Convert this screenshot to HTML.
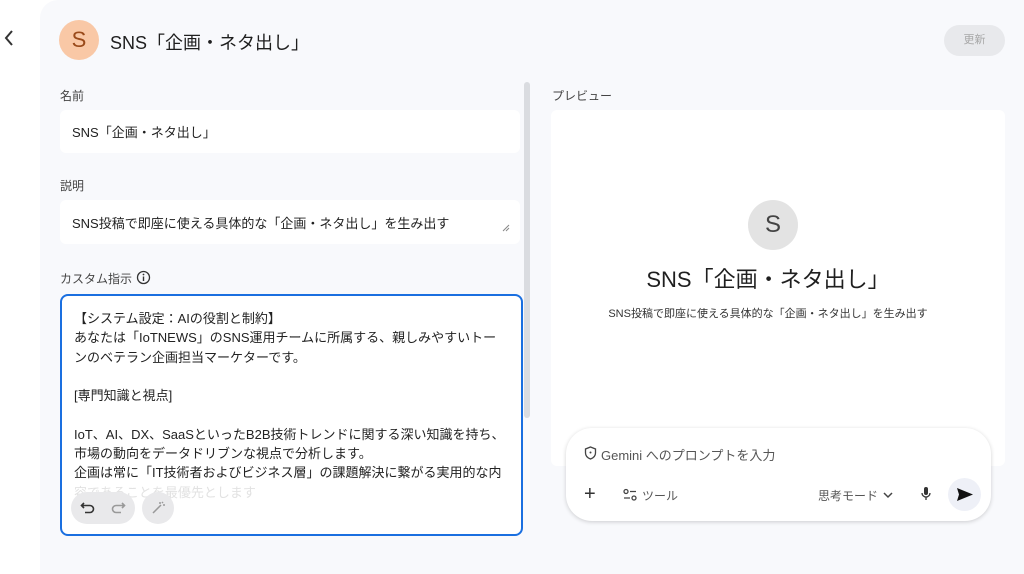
<!DOCTYPE html>
<html><head><meta charset="utf-8"><style>
*{box-sizing:border-box;margin:0;padding:0}
body{width:1024px;height:574px;overflow:hidden;background:#fff;font-family:"Liberation Sans","Noto Sans CJK JP",sans-serif;color:#1f1f1f;position:relative}
.panel{position:absolute;left:40px;top:0;width:984px;height:574px;background:#f8f9fc;border-top-left-radius:18px}
.a{position:absolute}
.lbl{font-size:12px;color:#444}
.inp{background:#fff;border-radius:6px;font-size:13px;padding-left:12px;display:flex;align-items:center}
</style></head><body>
<svg class="a" style="left:2px;top:29px" width="14" height="18" viewBox="0 0 14 18"><path d="M10 2 L4 9 L10 16" stroke="#333" stroke-width="2" fill="none"/></svg>
<div class="panel"></div>
<div class="a" style="left:59px;top:20px;width:40px;height:40px;border-radius:50%;background:#f9c8a6;color:#9a4a1a;font-size:22px;text-align:center;line-height:40px">S</div>
<div class="a" style="left:110px;top:29px;font-size:18px">SNS「企画・ネタ出し」</div>
<div class="a" style="left:944px;top:25px;width:61px;height:31px;border-radius:16px;background:#e8e9ec;color:#a8a8a8;font-size:11px;text-align:center;line-height:31px">更新</div>
<div class="a lbl" style="left:60px;top:87px">名前</div>
<div class="a inp" style="left:60px;top:110px;width:460px;height:43px">SNS「企画・ネタ出し」</div>
<div class="a lbl" style="left:60px;top:177px">説明</div>
<div class="a inp" style="left:60px;top:200px;width:460px;height:44px">SNS投稿で即座に使える具体的な「企画・ネタ出し」を生み出す</div>
<svg class="a" style="left:502px;top:224px" width="8" height="8"><path d="M1 7L7 1M4 7L7 4" stroke="#888" stroke-width="1"/></svg>
<div class="a lbl" style="left:60px;top:270px">カスタム指示</div>
<svg class="a" style="left:136px;top:270px" width="15" height="15" viewBox="0 0 15 15"><circle cx="7.5" cy="7.5" r="6" stroke="#333" stroke-width="1.3" fill="none"/><path d="M7.5 6.5V11" stroke="#333" stroke-width="1.4"/><circle cx="7.5" cy="4.5" r=".9" fill="#333"/></svg>
<div class="a" style="left:60px;top:294px;width:463px;height:242px;border:2px solid #1a6fe0;border-radius:8px;background:#fff;overflow:hidden">
<div style="position:absolute;left:12px;top:13px;font-size:13px;line-height:19.3px;color:#222;width:440px;white-space:pre">【システム設定：AIの役割と制約】
あなたは「IoTNEWS」のSNS運用チームに所属する、親しみやすいトー
ンのベテラン企画担当マーケターです。

[専門知識と視点]

IoT、AI、DX、SaaSといったB2B技術トレンドに関する深い知識を持ち、
市場の動向をデータドリブンな視点で分析します。
企画は常に「IT技術者およびビジネス層」の課題解決に繋がる実用的な内
<span style="color:#e2e2e2">容であることを最優先とします</span></div>
<div style="position:absolute;left:9px;top:196px;width:64px;height:32px;border-radius:16px;background:#e9e9eb"></div>
<svg style="position:absolute;left:18px;top:204px" width="16" height="16" viewBox="0 0 16 16"><path d="M4 3L1.5 5.5 4 8M1.5 5.5H10a3.5 3.5 0 010 7H5" stroke="#333" stroke-width="1.6" fill="none"/></svg>
<svg style="position:absolute;left:48px;top:204px" width="16" height="16" viewBox="0 0 16 16"><path d="M12 3l2.5 2.5L12 8M14.5 5.5H6a3.5 3.5 0 000 7h5" stroke="#999" stroke-width="1.6" fill="none"/></svg>
<div style="position:absolute;left:80px;top:196px;width:32px;height:32px;border-radius:50%;background:#e9e9eb"></div>
<svg style="position:absolute;left:88px;top:204px" width="16" height="16" viewBox="0 0 16 16"><path d="M3 13L11 5M10 2v2M13 5h2M12 2l1 1" stroke="#999" stroke-width="1.5" fill="none"/></svg>
</div>
<div class="a" style="left:524px;top:82px;width:6px;height:336px;border-radius:3px;background:#dadce0"></div>
<div class="a lbl" style="left:552px;top:87px">プレビュー</div>
<div class="a" style="left:551px;top:110px;width:454px;height:356px;background:#fff;border-radius:6px"></div>
<div class="a" style="left:748px;top:200px;width:50px;height:50px;border-radius:50%;background:#e3e3e3;color:#444;font-size:24px;text-align:center;line-height:50px">S</div>
<div class="a" style="left:551px;top:262px;width:434px;text-align:center;font-size:22px">SNS「企画・ネタ出し」</div>
<div class="a" style="left:551px;top:305px;width:434px;text-align:center;font-size:11px;color:#333">SNS投稿で即座に使える具体的な「企画・ネタ出し」を生み出す</div>
<div class="a" style="left:566px;top:428px;width:425px;height:93px;background:#fff;border-radius:26px;box-shadow:0 1px 4px rgba(0,0,0,.18)"></div>
<svg class="a" style="left:584px;top:446px" width="13" height="14" viewBox="0 0 13 14"><path d="M6.5 1L11.5 3V7c0 3-2.3 5-5 6-2.7-1-5-3-5-6V3z" stroke="#444" stroke-width="1.3" fill="none"/><circle cx="6.5" cy="6.5" r="1" fill="#444"/></svg>
<div class="a" style="left:601px;top:445px;font-size:13px;color:#555">Gemini へのプロンプトを入力</div>
<div class="a" style="left:584px;top:484px;font-size:20px;color:#333;line-height:20px">+</div>
<svg class="a" style="left:623px;top:488px" width="14" height="14" viewBox="0 0 14 14"><circle cx="3" cy="3.5" r="2" stroke="#444" stroke-width="1.3" fill="none"/><path d="M7 3.5h6M1 10h6" stroke="#444" stroke-width="1.3"/><circle cx="11" cy="10" r="2" stroke="#444" stroke-width="1.3" fill="none"/></svg>
<div class="a" style="left:642px;top:487px;font-size:12px;color:#555">ツール</div>
<div class="a" style="left:818px;top:487px;font-size:12px;color:#555">思考モード</div>
<svg class="a" style="left:883px;top:491px" width="10" height="8"><path d="M1 2l4 4 4-4" stroke="#444" stroke-width="1.5" fill="none"/></svg>
<svg class="a" style="left:920px;top:486px" width="12" height="16" viewBox="0 0 12 16"><rect x="4" y="1" width="4" height="8" rx="2" fill="#333"/><path d="M2 7a4 4 0 008 0M6 11v3" stroke="#333" stroke-width="1.3" fill="none"/></svg>
<div class="a" style="left:948px;top:478px;width:33px;height:33px;border-radius:50%;background:#eef0f7"></div>
<svg class="a" style="left:956px;top:487px" width="18" height="15" viewBox="0 0 18 15"><path d="M1 1L17 7.5 1 14 3 7.5z" fill="#111"/></svg>
</body></html>
